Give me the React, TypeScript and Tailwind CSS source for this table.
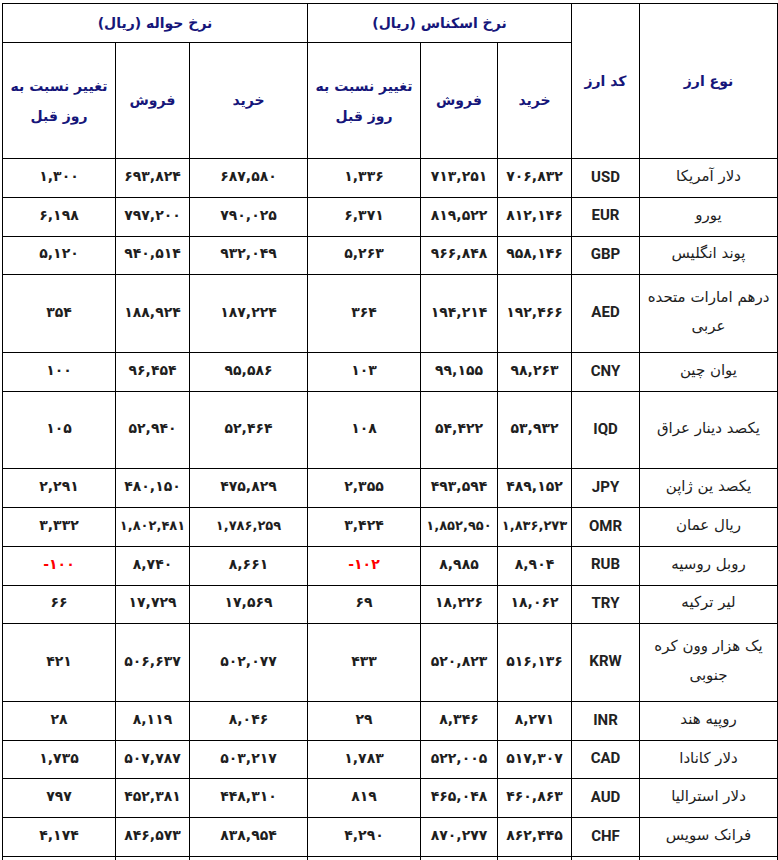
import React from "react";

type Row = {
  name: string[];
  code: string;
  vals: string[];
  tall?: boolean;
};

const rows: Row[] = [
  { name: ["دلار آمریکا"], code: "USD", vals: ["۷۰۶,۸۳۲", "۷۱۳,۲۵۱", "۱,۳۳۶", "۶۸۷,۵۸۰", "۶۹۳,۸۲۴", "۱,۳۰۰"] },
  { name: ["یورو"], code: "EUR", vals: ["۸۱۲,۱۴۶", "۸۱۹,۵۲۲", "۶,۳۷۱", "۷۹۰,۰۲۵", "۷۹۷,۲۰۰", "۶,۱۹۸"] },
  { name: ["پوند انگلیس"], code: "GBP", vals: ["۹۵۸,۱۴۶", "۹۶۶,۸۴۸", "۵,۲۶۳", "۹۳۲,۰۴۹", "۹۴۰,۵۱۴", "۵,۱۲۰"] },
  { name: ["درهم امارات متحده", "عربی"], code: "AED", vals: ["۱۹۲,۴۶۶", "۱۹۴,۲۱۴", "۳۶۴", "۱۸۷,۲۲۴", "۱۸۸,۹۲۴", "۳۵۴"], tall: true },
  { name: ["یوان چین"], code: "CNY", vals: ["۹۸,۲۶۳", "۹۹,۱۵۵", "۱۰۳", "۹۵,۵۸۶", "۹۶,۴۵۴", "۱۰۰"] },
  { name: ["یکصد دینار عراق"], code: "IQD", vals: ["۵۳,۹۳۲", "۵۴,۴۲۲", "۱۰۸", "۵۲,۴۶۴", "۵۲,۹۴۰", "۱۰۵"], tall: true },
  { name: ["یکصد ین ژاپن"], code: "JPY", vals: ["۴۸۹,۱۵۲", "۴۹۳,۵۹۴", "۲,۳۵۵", "۴۷۵,۸۲۹", "۴۸۰,۱۵۰", "۲,۲۹۱"] },
  { name: ["ریال عمان"], code: "OMR", vals: ["۱,۸۳۶,۲۷۳", "۱,۸۵۲,۹۵۰", "۳,۴۲۴", "۱,۷۸۶,۲۵۹", "۱,۸۰۲,۴۸۱", "۳,۳۳۲"] },
  { name: ["روبل روسیه"], code: "RUB", vals: ["۸,۹۰۴", "۸,۹۸۵", "-۱۰۲", "۸,۶۶۱", "۸,۷۴۰", "-۱۰۰"] },
  { name: ["لیر ترکیه"], code: "TRY", vals: ["۱۸,۰۶۲", "۱۸,۲۲۶", "۶۹", "۱۷,۵۶۹", "۱۷,۷۲۹", "۶۶"] },
  { name: ["یک هزار وون کره", "جنوبی"], code: "KRW", vals: ["۵۱۶,۱۳۶", "۵۲۰,۸۲۳", "۴۳۳", "۵۰۲,۰۷۷", "۵۰۶,۶۳۷", "۴۲۱"], tall: true },
  { name: ["روپیه هند"], code: "INR", vals: ["۸,۲۷۱", "۸,۳۴۶", "۲۹", "۸,۰۴۶", "۸,۱۱۹", "۲۸"] },
  { name: ["دلار کانادا"], code: "CAD", vals: ["۵۱۷,۳۰۷", "۵۲۲,۰۰۵", "۱,۷۸۳", "۵۰۳,۲۱۷", "۵۰۷,۷۸۷", "۱,۷۳۵"] },
  { name: ["دلار استرالیا"], code: "AUD", vals: ["۴۶۰,۸۶۳", "۴۶۵,۰۴۸", "۸۱۹", "۴۴۸,۳۱۰", "۴۵۲,۳۸۱", "۷۹۷"] },
  { name: ["فرانک سویس"], code: "CHF", vals: ["۸۶۲,۴۴۵", "۸۷۰,۲۷۷", "۴,۲۹۰", "۸۳۸,۹۵۴", "۸۴۶,۵۷۳", "۴,۱۷۴"] },
];

const F = "[font-family:'DejaVu_Sans',sans-serif]";
const TH = "border border-black text-[#16167a] font-bold text-[14px] align-middle";

export default function App() {
  return (
    <div className="bg-white w-[778px] h-[860px] overflow-hidden pt-[3px] pl-[2px]">
      <table dir="rtl" className={`table-fixed border-collapse w-[776px] ${F} text-[14px]`}>
        <colgroup>
          <col className="w-[138px]" />
          <col className="w-[68px]" />
          <col className="w-[74px]" />
          <col className="w-[77px]" />
          <col className="w-[113px]" />
          <col className="w-[118px]" />
          <col className="w-[74px]" />
          <col className="w-[113px]" />
        </colgroup>
        <thead>
          <tr className="h-[39px]">
            <th rowSpan={2} className={TH}>نوع ارز</th>
            <th rowSpan={2} className={TH}>کد ارز</th>
            <th colSpan={3} className={TH}>نرخ اسکناس (ریال)</th>
            <th colSpan={3} className={TH}>نرخ حواله (ریال)</th>
          </tr>
          <tr className="h-[116px]">
            <th className={TH}>خرید</th>
            <th className={TH}>فروش</th>
            <th className={`${TH} leading-[30px] px-[6px]`}>
              تغییر نسبت به
              <br />
              روز قبل
            </th>
            <th className={TH}>خرید</th>
            <th className={TH}>فروش</th>
            <th className={`${TH} leading-[30px] px-[6px]`}>
              تغییر نسبت به
              <br />
              روز قبل
            </th>
          </tr>
        </thead>
        <tbody>
          {rows.map((r) => (
            <tr key={r.code} className={r.tall ? "h-[77.5px]" : "h-[38.8px]"}>
              <td className="border border-black text-center text-[#1e1e1e] text-[15px] leading-[29px] px-1 pb-[3px]">
                {r.name.map((n, i) => (
                  <div key={i}>{n}</div>
                ))}
              </td>
              <td className="border border-black text-center text-[#222] font-bold text-[15px] pb-[2px] [font-family:Roboto,'Liberation_Sans',sans-serif]">
                {r.code}
              </td>
              {r.vals.map((v, i) => (
                <td
                  key={i}
                  className={`border border-black text-center font-bold whitespace-nowrap px-0 pb-[3px] ${
                    v.length > 8 ? "text-[13px] tracking-[-0.4px]" : "text-[14px]"
                  } ${v.startsWith("-") ? "text-[#ff0000]" : "text-[#1e1e1e]"}`}
                >
                  <span dir="ltr">{v}</span>
                </td>
              ))}
            </tr>
          ))}
          <tr className="h-[38.8px]">
            {Array.from({ length: 8 }).map((_, i) => (
              <td key={i} className="border border-black" />
            ))}
          </tr>
        </tbody>
      </table>
    </div>
  );
}
